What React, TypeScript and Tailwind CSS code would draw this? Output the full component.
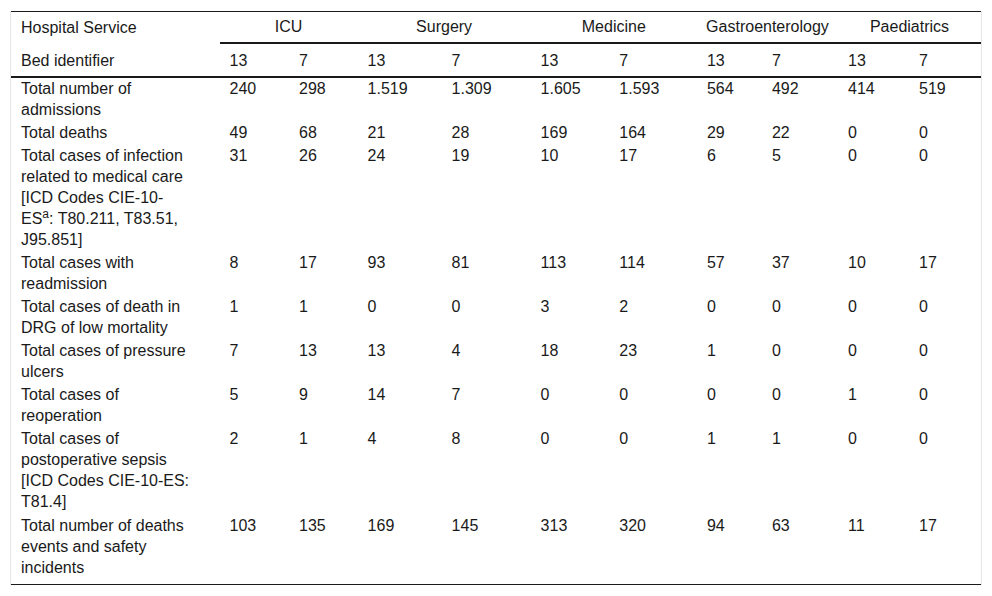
import React from 'react';

type Row = { label: React.ReactNode; values: string[] };

const groups = ['ICU', 'Surgery', 'Medicine', 'Gastroenterology', 'Paediatrics'];

const rows: Row[] = [
    { label: 'Total number of admissions', values: ['240', '298', '1.519', '1.309', '1.605', '1.593', '564', '492', '414', '519'] },
    { label: 'Total deaths', values: ['49', '68', '21', '28', '169', '164', '29', '22', '0', '0'] },
    {
        label: (
            <>
                Total cases of infection related to medical care [ICD Codes CIE-10-ES<sup>a</sup>: T80.211, T83.51, J95.851]
            </>
        ),
        values: ['31', '26', '24', '19', '10', '17', '6', '5', '0', '0'],
    },
    { label: 'Total cases with readmission', values: ['8', '17', '93', '81', '113', '114', '57', '37', '10', '17'] },
    { label: 'Total cases of death in DRG of low mortality', values: ['1', '1', '0', '0', '3', '2', '0', '0', '0', '0'] },
    { label: 'Total cases of pressure ulcers', values: ['7', '13', '13', '4', '18', '23', '1', '0', '0', '0'] },
    { label: 'Total cases of reoperation', values: ['5', '9', '14', '7', '0', '0', '0', '0', '1', '0'] },
    {
        label: 'Total cases of postoperative sepsis [ICD Codes CIE-10-ES: T81.4]',
        values: ['2', '1', '4', '8', '0', '0', '1', '1', '0', '0'],
    },
    {
        label: 'Total number of deaths events and safety incidents',
        values: ['103', '135', '169', '145', '313', '320', '94', '63', '11', '17'],
    },
];

export default function App() {
    return (
        <div className="min-h-screen bg-white px-[10px] pt-[11px] font-['Liberation_Sans',Arial,sans-serif] text-[16px] leading-[21px] text-[#1a1a1a]">
            <div className="border-x border-[#e6e6e6]">
                <table className="w-full table-fixed border-collapse border-y border-[#1a1a1a]">
                    <colgroup>
                        <col className="w-[208.5px]" />
                        <col className="w-[69.5px]" />
                        <col className="w-[68.6px]" />
                        <col className="w-[84px]" />
                        <col className="w-[89px]" />
                        <col className="w-[78.7px]" />
                        <col className="w-[87.7px]" />
                        <col className="w-[65px]" />
                        <col className="w-[76px]" />
                        <col className="w-[71px]" />
                        <col className="w-[72px]" />
                    </colgroup>
                    <thead>
                        <tr>
                            <th className="pl-[10px] pr-[26px] pt-[4px] pb-[5px] text-left font-normal">Hospital Service</th>
                            {groups.map((g) => (
                                <th
                                    key={g}
                                    colSpan={2}
                                    className="border-b-2 border-[#1a1a1a] pt-[4px] pb-[5px] text-center font-normal"
                                >
                                    {g}
                                </th>
                            ))}
                        </tr>
                        <tr className="border-b-2 border-[#1a1a1a]">
                            <th className="pl-[10px] pr-[26px] pt-[6px] pb-[5px] text-left font-normal">Bed identifier</th>
                            {groups.map((g) => (
                                <React.Fragment key={g}>
                                    <th className="pl-[10px] pt-[6px] pb-[5px] text-left font-normal">13</th>
                                    <th className="pl-[10px] pt-[6px] pb-[5px] text-left font-normal">7</th>
                                </React.Fragment>
                            ))}
                        </tr>
                    </thead>
                    <tbody>
                        {rows.map((r, i) => {
                            const pad = i === rows.length - 1 ? 'pt-[1px] pb-[6px]' : 'pt-0 pb-[2px]';
                            return (
                                <tr key={i}>
                                    <td className={`pl-[10px] pr-[26px] align-top ${pad}`}>{r.label}</td>
                                    {r.values.map((v, j) => (
                                        <td key={j} className={`pl-[10px] align-top ${pad}`}>
                                            {v}
                                        </td>
                                    ))}
                                </tr>
                            );
                        })}
                    </tbody>
                </table>
            </div>
        </div>
    );
}
